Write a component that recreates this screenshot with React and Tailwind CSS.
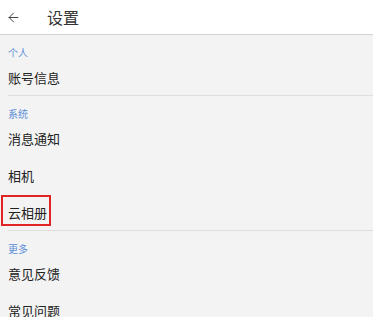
import React from "react";
import { ArrowLeft } from "lucide-react";

const sections = [
  { title: "个人", items: ["账号信息"] },
  { title: "系统", items: ["消息通知", "相机", "云相册"] },
  { title: "更多", items: ["意见反馈", "常见问题"] },
];

const App = () => {
  return (
    <div
      className="w-[373px] h-[317px] overflow-hidden bg-[#f3f3f3]"
      style={{ fontFamily: '"Noto Sans CJK SC", "Noto Sans", sans-serif' }}
    >
      <div className="h-[35px] bg-white border-b border-[#d2d2d2] flex items-center">
        <span className="ml-[6px] text-[#444]">
          <ArrowLeft size={15} strokeWidth={1.6} />
        </span>
        <p className="ml-[26px] text-[16px] text-[#333] leading-none">设置</p>
      </div>

      {sections.map((section, i) => (
        <div key={section.title}>
          <p className="pt-[12px] h-[24px] px-2 text-[10px] leading-[12px] text-[#5d8fd8]">
            {section.title}
          </p>
          {section.items.map((item, j) => (
            <div
              key={item}
              className={
                j === section.items.length - 1 && i < sections.length - 1
                  ? "h-[37px] ml-2 flex items-center border-b border-[#dedede]"
                  : "h-[37px] ml-2 flex items-center"
              }
            >
              <span className="relative text-[13px] text-[#222] leading-none">
                {item}
                {item === "云相册" && (
                  <span className="absolute left-[-7px] top-[-11px] w-[50px] h-[31px] border-2 border-[#e02424]" />
                )}
              </span>
            </div>
          ))}
        </div>
      ))}
    </div>
  );
};

export default App;
